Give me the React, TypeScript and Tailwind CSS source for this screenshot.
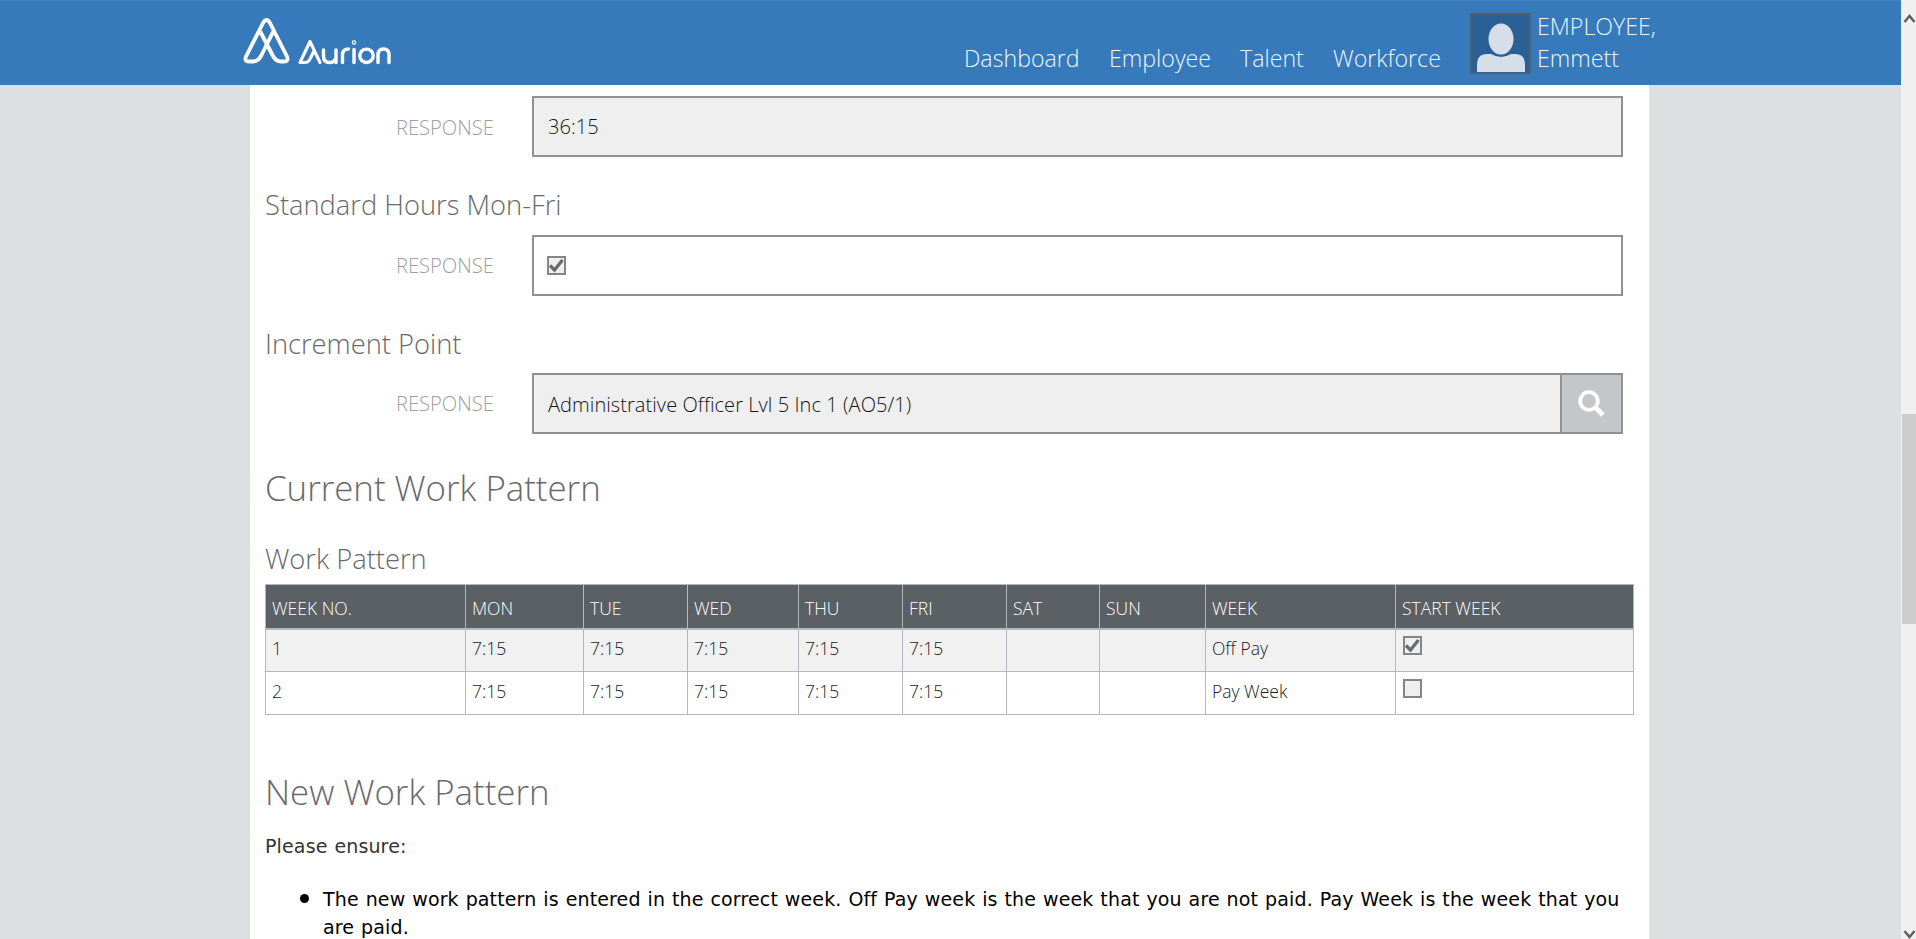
import React from "react";

const navItems = [
  { label: "Dashboard", cls: "w-[145px]" },
  { label: "Employee", cls: "w-[131px]" },
  { label: "Talent", cls: "w-[93px]" },
  { label: "Workforce", cls: "w-[135px]" },
];

const columns = [
  { label: "WEEK NO.", width: "w-[200px]" },
  { label: "MON", width: "w-[118px]" },
  { label: "TUE", width: "w-[104px]" },
  { label: "WED", width: "w-[111px]" },
  { label: "THU", width: "w-[104px]" },
  { label: "FRI", width: "w-[104px]" },
  { label: "SAT", width: "w-[93px]" },
  { label: "SUN", width: "w-[106px]" },
  { label: "WEEK", width: "w-[190px]" },
  { label: "START WEEK", width: "w-[238px]" },
];

const rows = [
  { cells: ["1", "7:15", "7:15", "7:15", "7:15", "7:15", "", "", "Off Pay"], start: true, bg: "bg-[#f1f1f1]" },
  { cells: ["2", "7:15", "7:15", "7:15", "7:15", "7:15", "", "", "Pay Week"], start: false, bg: "bg-white" },
];

function Logo() {
  return (
    <div className="flex w-[150px] items-end">
      <svg className="overflow-visible" width="48" height="48" viewBox="0 0 48 48" fill="none" stroke="#fff" strokeWidth="3.8" strokeLinejoin="round" strokeLinecap="round">
        <path d="M17.500 13 L30 37 Q33 42.500 38 42.500 H41 Q46 42.500 44 37.500 L27 4 Q23.500 -2 20 4 L3 37.500 Q1 42.500 6 42.500 H10 Q15 42.500 18 37 L30 13" />
      </svg>
      <svg className="ml-[6px]" width="94" height="47" viewBox="0 0 94 47" fill="none" stroke="#fff" strokeWidth="3.4" strokeLinejoin="round" strokeLinecap="round">
        <path d="M23 42.500 L13 21.500 L3 42.500 H8 Q11.500 42.500 13 39 L17 31" strokeWidth="3.1" />
        <path d="M26.500 30 V36 Q26.500 42.500 32.500 42.500 Q39 42.500 39 36 V30 M39 36 V42.500" />
        <path d="M45.500 42.500 V35 Q45.500 29 51.500 29" />
        <path d="M57 29.500 V42.500" />
        <circle cx="57" cy="22.500" r="0.600" />
        <circle cx="69.500" cy="35.800" r="6.700" />
        <path d="M81 42.500 V35 Q81 29 86.500 29 Q92 29 92 35 V42.500" />
      </svg>
    </div>
  );
}

function CheckBox({ checked }: { checked: boolean }) {
  return (
    <span className="flex h-[19px] w-[19px] items-center justify-center border-2 border-[#848587] bg-[#efefef]">
      {checked && (
        <svg className="shrink-0" width="17" height="17" viewBox="0 0 17 17" fill="none" stroke="#68696b" strokeWidth="3.2">
          <path d="M2 8.500 L6.500 13 L14.500 3" />
        </svg>
      )}
    </span>
  );
}

function SearchIcon() {
  return (
    <svg className="mr-[2px] mb-[2px]" width="28" height="28" viewBox="0 0 28 28" fill="none" stroke="#fff">
      <circle cx="12" cy="12" r="8.800" strokeWidth="3.800" />
      <path d="M18 18 L26 26" strokeWidth="4.800" />
    </svg>
  );
}

function Field({ children, tinted, labelPad = "pt-[15px]" }: { children: React.ReactNode; tinted?: boolean; labelPad?: string }) {
  return (
    <div className="flex h-[61px]">
      <div className={"w-[229px] text-right text-[20.200px] leading-[30px] text-[#9da0a3] " + labelPad}>RESPONSE</div>
      <div className={"ml-[38px] flex w-[1091px] items-center border-2 border-[#8f9194] " + (tinted ? "bg-[#efefef]" : "bg-white")}>
        {children}
      </div>
    </div>
  );
}

export default function App() {
  return (
    <div className="flex h-[939px] w-[1916px] overflow-hidden bg-[#dddfe1] font-['Open_Sans',sans-serif] font-light">
      <div className="flex w-[1901px] flex-col">
        <header className="flex h-[85px] shrink-0 border-t border-[#4582c3] bg-[#377abc]">
          <div className="ml-[243px] pt-[18px]"><Logo /></div>
          <nav className="ml-[571px] flex pt-[41px] text-[23.200px] leading-[32px] text-[#eef5fb]">
            {navItems.map((n) => (
              <a key={n.label} className={n.cls}>{n.label}</a>
            ))}
          </nav>
          <div className="mt-[12px] ml-[2px] flex h-[61px] w-[61px] shrink-0 items-end justify-center border-2 border-[#4a6079] bg-[#2b6096]">
            <svg width="50" height="50" viewBox="0 0 50 50" fill="#d6dfe9">
              <ellipse cx="25" cy="17" rx="12.500" ry="15.500" />
              <path d="M1 50 V43 Q1 32 11 32 H15 Q25 38 35 32 H39 Q49 32 49 43 V50 Z" />
            </svg>
          </div>
          <div className="ml-[6px] pt-[9px] text-[23.200px] leading-[32px] text-[#eef5fb]">
            <div>EMPLOYEE,</div>
            <div>Emmett</div>
          </div>
        </header>
        <main className="ml-[250px] flex w-[1399px] grow flex-col bg-white pt-[11px] pl-[15px]">
          <Field tinted labelPad="pt-[16px]"><span className="pl-[14px] text-[20px] tracking-[0.070px] text-[#141414]">36:15</span></Field>
          <h3 className="h-[78px] pt-[28px] text-[27.300px] leading-[40px] text-[#68696b]">Standard Hours Mon-Fri</h3>
          <Field><div className="pl-[13px]"><CheckBox checked /></div></Field>
          <h3 className="h-[77px] pt-[28px] text-[27.300px] leading-[40px] text-[#68696b]">Increment Point</h3>
          <Field tinted>
            <span className="flex-1 self-center pt-[2px] pl-[14px] text-[20px] tracking-[0.070px] text-[#141414]">Administrative Officer Lvl 5 Inc 1 (AO5/1)</span>
            <button className="flex h-full w-[61px] items-center justify-center border-l-2 border-[#8f9194] bg-[#c3c7ca]"><SearchIcon /></button>
          </Field>
          <h2 className="h-[105px] pt-[29px] text-[34.800px] leading-[50px] text-[#68696b]">Current Work Pattern</h2>
          <h3 className="h-[45px] text-[27.300px] leading-[40px] text-[#68696b]">Work Pattern</h3>
          <table className="w-[1369px] table-fixed border-collapse text-[17.500px] text-[#1a1a1a]">
            <thead>
              <tr className="h-[44px] bg-[#5b6064] text-white">
                {columns.map((c) => (
                  <th key={c.label} className={c.width + " border border-b-2 border-[#b4b8bc] pt-[4px] pl-[6px] text-left font-light"}>{c.label}</th>
                ))}
              </tr>
            </thead>
            <tbody>
              {rows.map((r) => (
                <tr key={r.cells[0]} className={"h-[43px] " + r.bg}>
                  {r.cells.map((c, i) => (
                    <td key={i} className="border border-[#b4b8bc] pt-0 pb-[4px] pl-[6px]">{c}</td>
                  ))}
                  <td className="border border-[#b4b8bc] pb-[10px] pl-[7px]"><CheckBox checked={r.start} /></td>
                </tr>
              ))}
            </tbody>
          </table>
          <h2 className="mt-[52px] h-[59px] text-[34.800px] leading-[50px] text-[#68696b]">New Work Pattern</h2>
          <div className="font-['DejaVu_Sans',sans-serif] text-[19px] leading-[28px] font-normal tracking-[0.140px] [word-spacing:0.7px]">
            <p className="mt-[6px] text-[#333]">Please ensure:</p>
            <div className="mt-[25px] flex text-black">
              <span className="mt-[9px] ml-[35px] h-[9px] w-[9px] shrink-0 rounded-full bg-black" />
              <p className="ml-[14px] w-[1316px]">
                The new work pattern is entered in the correct week. Off Pay week is the week that you are not paid. Pay Week is the week that you<br />are paid.
              </p>
            </div>
          </div>
        </main>
      </div>
      <div className="flex w-[15px] flex-col items-center bg-[#f0f0f0]">
        <svg className="mt-[13px] shrink-0 self-end" width="13" height="12" viewBox="0 0 13 12" fill="none" stroke="#606060" strokeWidth="2.500"><path d="M1.500 9 L6.500 3 L11.500 9" /></svg>
        <div className="mt-[389px] h-[210px] w-[14px] shrink-0 self-end bg-[#cdcdcd]" />
        <svg className="mt-auto shrink-0 self-end" width="13" height="10" viewBox="0 0 13 10" fill="none" stroke="#606060" strokeWidth="2.500"><path d="M1.500 2 L6.500 8 L11.500 2" /></svg>
      </div>
    </div>
  );
}
